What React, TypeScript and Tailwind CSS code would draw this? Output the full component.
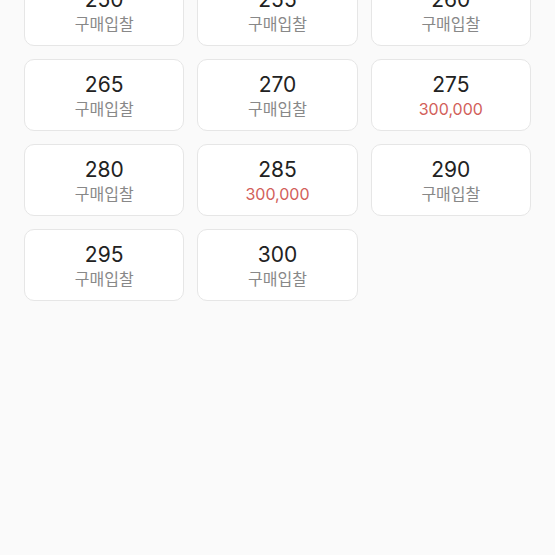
const sizes: { size: string; price?: string }[] = [
    { size: '250' },
    { size: '255' },
    { size: '260' },
    { size: '265' },
    { size: '270' },
    { size: '275', price: '300,000' },
    { size: '280' },
    { size: '285', price: '300,000' },
    { size: '290' },
    { size: '295' },
    { size: '300' },
];

export default function App() {
    return (
        <div className="h-[555px] overflow-hidden bg-[#fafafa] font-['Inter','Noto_Sans_CJK_KR',sans-serif]">
            <div className="-mt-[26px] grid grid-cols-3 gap-[13px] px-6">
                {sizes.map((item) => (
                    <div
                        key={item.size}
                        className="flex h-[72px] flex-col items-center justify-center rounded-[10px] border border-[#e6e6e6] bg-white pt-[2px]"
                    >
                        <span className="text-[21px] leading-[26px] text-[#222]">{item.size}</span>
                        {item.price ? (
                            <span className="text-[16px] leading-[22px] text-[#d2605a]">{item.price}</span>
                        ) : (
                            <span className="text-[16px] leading-[22px] text-[#888]">구매입찰</span>
                        )}
                    </div>
                ))}
            </div>
        </div>
    );
}
